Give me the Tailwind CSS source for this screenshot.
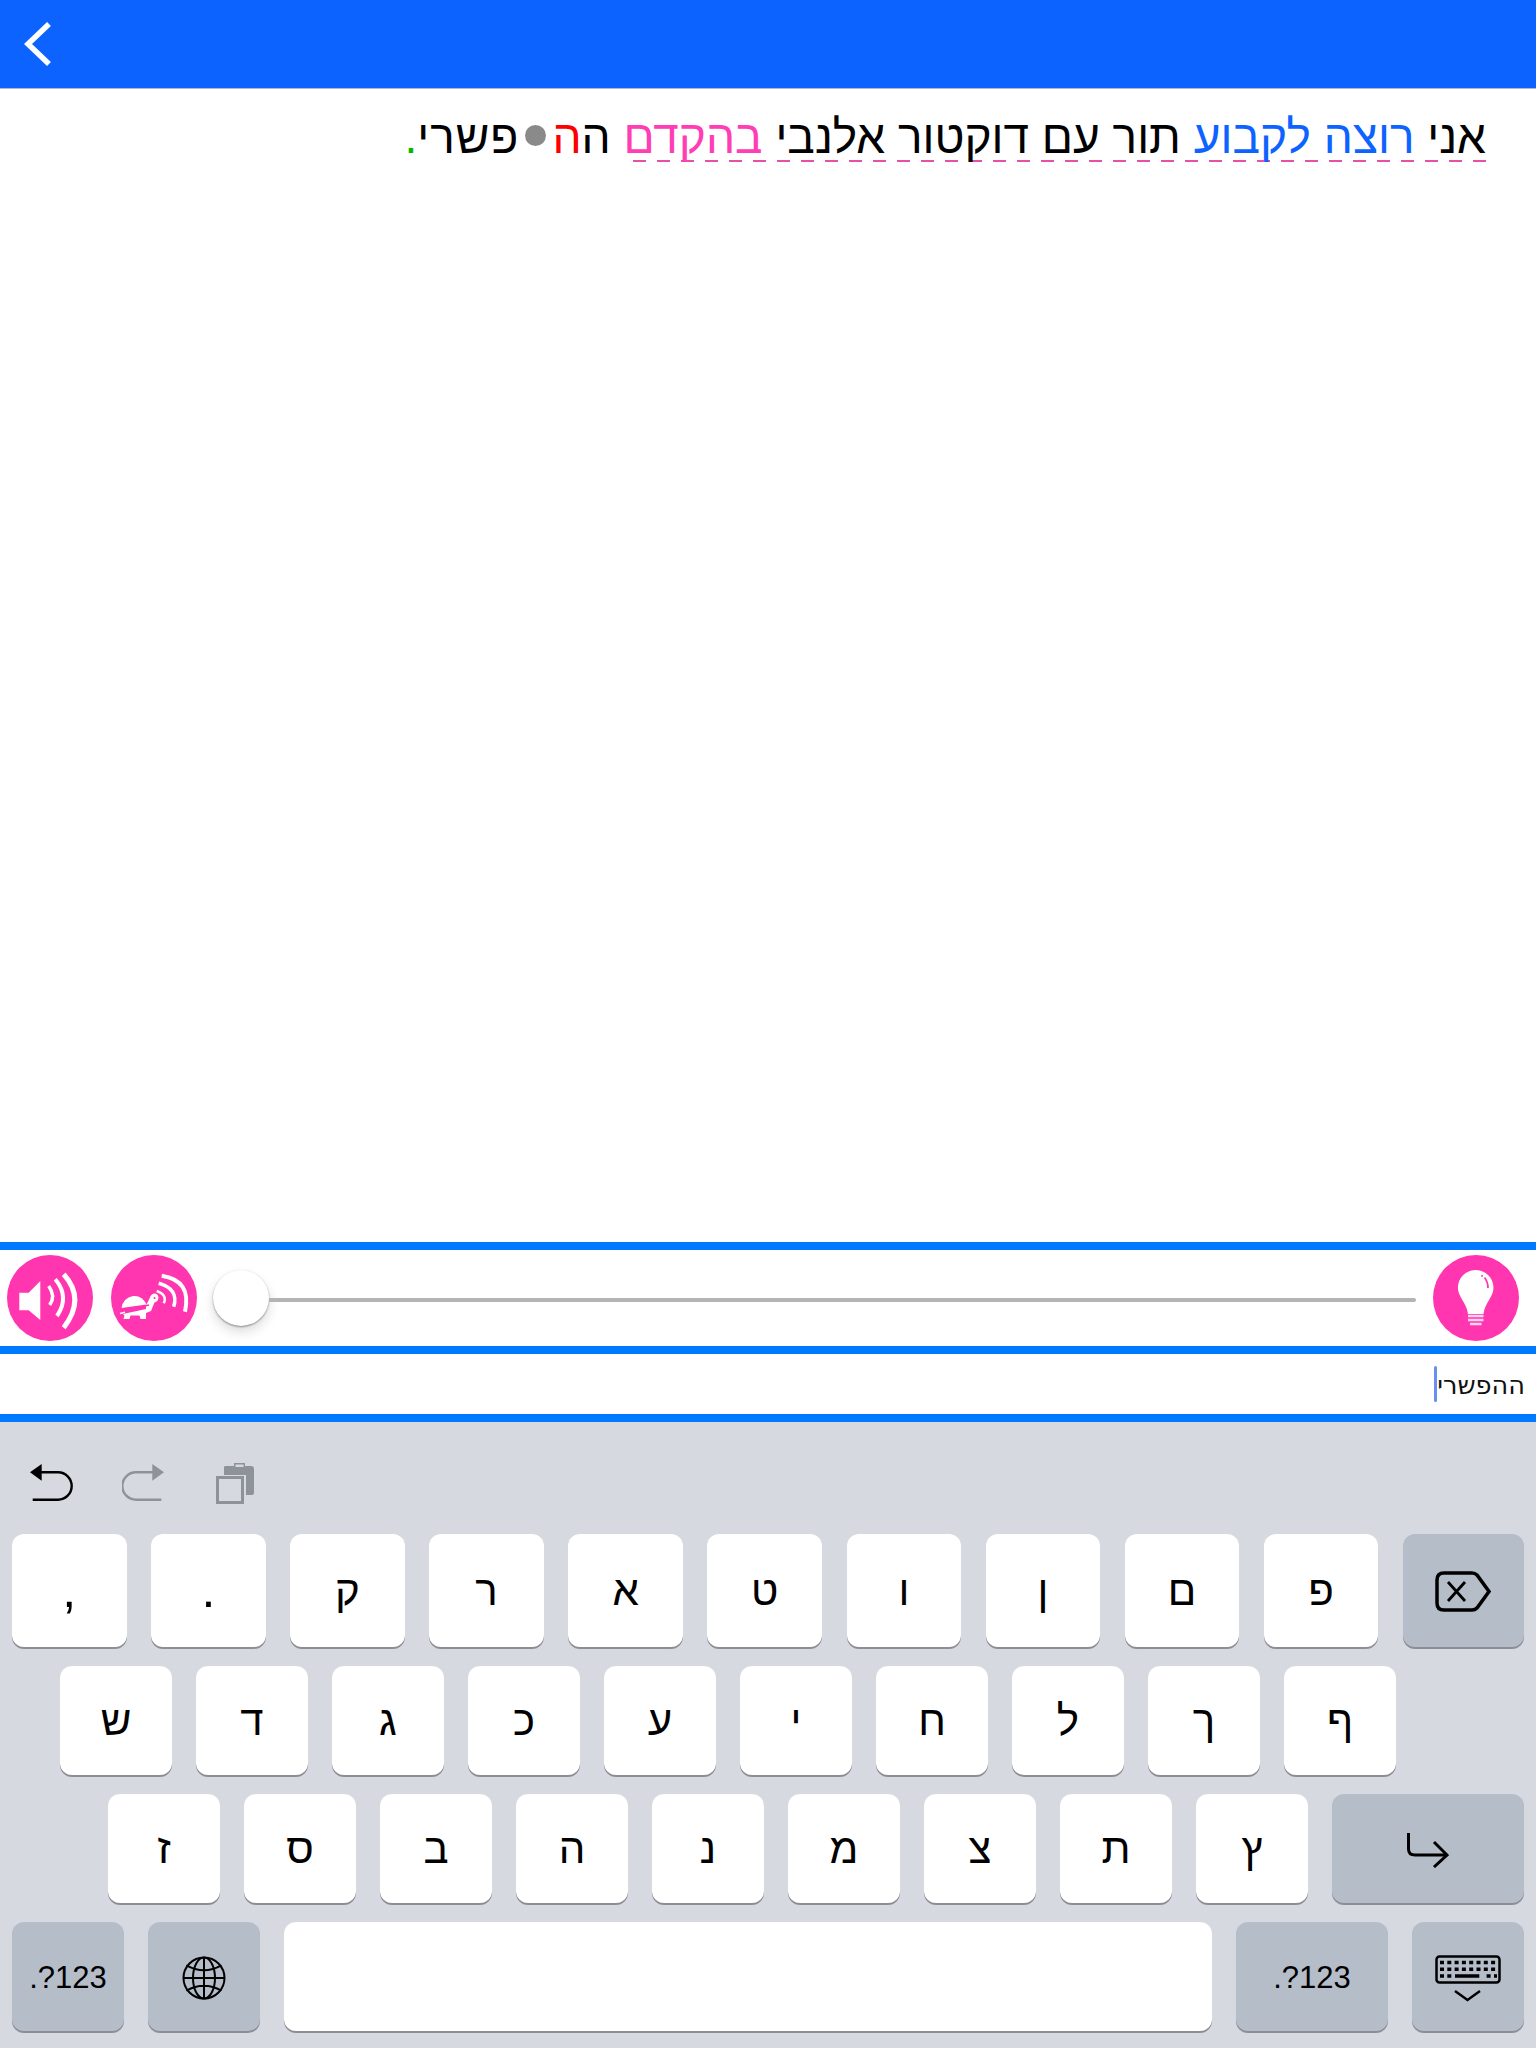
<!DOCTYPE html>
<html lang="he">
<head>
    <meta charset="UTF-8">
    <meta name="viewport" content="width=device-width, initial-scale=1.0">
    <title>Keyboard practice</title>
    <script src="https://cdn.jsdelivr.net/npm/@tailwindcss/browser@4"></script>
</head>
<body class="bg-white">
<div class="w-[1536px] h-[2048px] flex flex-col overflow-hidden font-['Liberation_Sans',sans-serif] text-black">

    <!-- Navbar -->
    <header class="h-[89px] shrink-0 bg-[#0d63ff] border-b border-[#b3b8c4] flex items-center pl-[24px]">
        <svg class="w-[28px] h-[44px]" viewBox="0 0 28 44" fill="none" stroke="#fff" stroke-width="5.500"><path d="M25 2 L4 22 L25 42"/></svg>
    </header>

    <!-- Sentence -->
    <main class="flex-1 pt-[18px] pr-[50px]" dir="rtl">
        <p class="text-[46px] leading-[60px]"><span class="bg-no-repeat bg-[position:left_0_bottom_1px] bg-[length:100%_2px] bg-[repeating-linear-gradient(to_left,#e94fa8_0_13px,transparent_13px_24px)]">אני <span class="text-[#0d63ff]">רוצה לקבוע</span> תור עם דוקטור אלנבי <span class="text-[#ff3db5]">בהקדם</span></span> ה<span class="text-[#ff0000]">ה</span><span class="inline-block w-[21px] h-[21px] rounded-full bg-[#8a8a8a] mx-[6px] align-[7px]"></span><span class="tracking-[1px]">פשרי</span><span class="text-[#00b800]">.</span></p>
    </main>

    <!-- Audio bar -->
    <section class="h-[112px] shrink-0 border-y-8 border-[#007aff] flex items-center pl-[7px] pr-[17px]">
        <button class="w-[86px] h-[86px] rounded-full bg-[#ff36b0]">
            <svg viewBox="0 0 86 86" class="w-full h-full" fill="none" stroke="#fff" stroke-linecap="butt">
                <path d="M12.300 37.700H21.700L33.300 26V65L21.700 55.300H12.300Z" fill="#fff" stroke="none"/>
                <path d="M41.700 31Q49 41 42.700 50" stroke-width="3.500"/>
                <path d="M48.300 24.300Q63 42 50 61" stroke-width="4"/>
                <path d="M56.700 19.300Q79 44 56.700 72.700" stroke-width="5"/>
            </svg>
        </button>
        <button class="w-[86px] h-[86px] rounded-full bg-[#ff36b0] ml-[18px]">
            <svg viewBox="0 0 86 86" class="w-full h-full" fill="none" stroke="#fff">
                <!-- turtle -->
                <path d="M10.500 53Q12 43 22 41Q31 40 35.500 49.500Z" fill="#fff" stroke="none"/>
                <path d="M12 59L35 54V64H29.500L28.500 60.500H19.500L18.500 64H12.500L13.500 60.500Z" fill="#fff" stroke="none"/>
                <path d="M35 50Q37 47 38.500 43.500Q40 38.500 44 38.500Q47.500 39 47.500 43Q47 46.500 43.500 47.500L40 56L35 58Z" fill="#fff" stroke="none"/>
                <path d="M9 57L38 50" stroke="#ff36b0" stroke-width="1.800"/>
                <path d="M9 58.500L14 57.300" stroke="#fff" stroke-width="1.500"/>
                <circle cx="43.500" cy="43" r="1" fill="#ff36b0" stroke="none"/>
                <!-- sound waves -->
                <path d="M45.700 36Q56.800 39.900 52.700 48.300" stroke-width="2.500"/>
                <path d="M47.700 28.300Q68.200 34 62.700 51.700" stroke-width="3.500"/>
                <path d="M50.700 20.700Q81 25.300 74 56.700" stroke-width="4"/>
            </svg>
        </button>
        <!-- slider -->
        <div class="flex-1 flex items-center ml-[16px] mr-[17px]">
            <div class="w-[56px] h-[56px] rounded-full bg-white shrink-0 shadow-[0_6px_12px_rgba(0,0,0,0.14),0_1px_2px_rgba(0,0,0,0.4)]"></div>
            <div class="flex-1 h-[4px] bg-[#b4b4b4] rounded-r-full mt-[3px]"></div>
        </div>
        <button class="w-[86px] h-[86px] rounded-full bg-[#ff36b0]">
            <svg viewBox="0 0 86 86" class="w-full h-full" fill="none">
                <path d="M42.700 15C32.800 15 24.900 23 24.900 32.700C24.900 42 33.500 47 35 59H50.500C52 47 60.500 42 60.500 32.700C60.500 23 52.500 15 42.700 15Z" fill="#fff"/>
                <path d="M48.300 20.500L49.800 21.300M51.500 22.500Q55 27 55 33" stroke="#ff36b0" stroke-width="1.800"/>
                <path d="M35 61H50.500M35 65H50.500M37 69H48.500" stroke="#ffd3ec" stroke-width="2.500"/>
            </svg>
        </button>
    </section>

    <!-- Typed answer -->
    <div class="h-[68px] shrink-0 border-b-8 border-[#007aff] flex items-center justify-start pr-[11px]" dir="rtl">
        <span class="font-['DejaVu_Sans',sans-serif] text-[25.6px] text-[#111111] mt-[2px]">ההפשרי</span>
        <span class="w-[3px] h-[36px] bg-[#6b8ff0] rounded-full"></span>
    </div>

    <!-- Keyboard -->
    <section class="h-[626px] shrink-0 bg-[#d6d9e0] text-[42px]">
        <div class="h-[112px] flex items-center pl-[30px] pt-[10px]">
            <svg class="w-[44px] h-[38px]" viewBox="0 0 44 38" fill="none" stroke="#000" stroke-width="2.400"><path d="M0 8.300L11.700 0V16.700Z" fill="#000" stroke="none"/><path d="M10 8.300H28A13.700 13.700 0 0 1 28 35.700H2.700"/></svg>
            <svg class="w-[44px] h-[38px] ml-[48px]" viewBox="0 0 44 38" fill="none" stroke="#8e9299" stroke-width="2.400"><path d="M42 8.300L30.300 0V16.700Z" fill="#8e9299" stroke="none"/><path d="M32 8.300H14A13.700 13.700 0 0 0 14 35.700H39.300"/></svg>
            <svg class="w-[40px] h-[42px] ml-[50px]" viewBox="0 0 40 42" fill="none"><path d="M8 13V5Q8 4 10 4H18V1H29V4H35Q38 4 38 7V31Q38 33 36 33H30V13Z" fill="#8e9299"/><rect x="19.500" y="2.500" width="8" height="2.500" fill="#d6d9e0"/><rect x="1.500" y="15.500" width="25" height="25" stroke="#8e9299" stroke-width="3"/></svg>
        </div>

        <div class="flex gap-[24.5px] pl-[12px] pr-[12px]">
            <div class="flex-1 h-[113px] bg-white rounded-[12px] shadow-[0_2px_0_#8c8e93] flex items-center justify-center text-[50px]">,</div>
            <div class="flex-1 h-[113px] bg-white rounded-[12px] shadow-[0_2px_0_#8c8e93] flex items-center justify-center text-[50px]">.</div>
            <div class="flex-1 h-[113px] bg-white rounded-[12px] shadow-[0_2px_0_#8c8e93] flex items-center justify-center">ק</div>
            <div class="flex-1 h-[113px] bg-white rounded-[12px] shadow-[0_2px_0_#8c8e93] flex items-center justify-center">ר</div>
            <div class="flex-1 h-[113px] bg-white rounded-[12px] shadow-[0_2px_0_#8c8e93] flex items-center justify-center">א</div>
            <div class="flex-1 h-[113px] bg-white rounded-[12px] shadow-[0_2px_0_#8c8e93] flex items-center justify-center">ט</div>
            <div class="flex-1 h-[113px] bg-white rounded-[12px] shadow-[0_2px_0_#8c8e93] flex items-center justify-center">ו</div>
            <div class="flex-1 h-[113px] bg-white rounded-[12px] shadow-[0_2px_0_#8c8e93] flex items-center justify-center">ן</div>
            <div class="flex-1 h-[113px] bg-white rounded-[12px] shadow-[0_2px_0_#8c8e93] flex items-center justify-center">ם</div>
            <div class="flex-1 h-[113px] bg-white rounded-[12px] shadow-[0_2px_0_#8c8e93] flex items-center justify-center">פ</div>
            <div class="w-[121px] h-[113px] bg-[#b5bdc9] rounded-[12px] shadow-[0_2px_0_#8c8e93] flex items-center justify-center">
                <svg class="w-[56px] h-[41px] mt-[1px]" viewBox="0 0 56 41" fill="none" stroke="#000" stroke-width="3.500"><path d="M9 2H37Q40 2 42 4L54 20.500L42 37Q40 39 37 39H9Q2 39 2 32V9Q2 2 9 2Z"/><path d="M13 11L30 30M30 11L13 30" stroke-width="2.800"/></svg>
            </div>
        </div>

        <div class="flex gap-[24px] pl-[60px] mt-[19px]">
            <div class="w-[112px] h-[109px] bg-white rounded-[12px] shadow-[0_2px_0_#8c8e93] flex items-center justify-center">ש</div>
            <div class="w-[112px] h-[109px] bg-white rounded-[12px] shadow-[0_2px_0_#8c8e93] flex items-center justify-center">ד</div>
            <div class="w-[112px] h-[109px] bg-white rounded-[12px] shadow-[0_2px_0_#8c8e93] flex items-center justify-center">ג</div>
            <div class="w-[112px] h-[109px] bg-white rounded-[12px] shadow-[0_2px_0_#8c8e93] flex items-center justify-center">כ</div>
            <div class="w-[112px] h-[109px] bg-white rounded-[12px] shadow-[0_2px_0_#8c8e93] flex items-center justify-center">ע</div>
            <div class="w-[112px] h-[109px] bg-white rounded-[12px] shadow-[0_2px_0_#8c8e93] flex items-center justify-center">י</div>
            <div class="w-[112px] h-[109px] bg-white rounded-[12px] shadow-[0_2px_0_#8c8e93] flex items-center justify-center">ח</div>
            <div class="w-[112px] h-[109px] bg-white rounded-[12px] shadow-[0_2px_0_#8c8e93] flex items-center justify-center">ל</div>
            <div class="w-[112px] h-[109px] bg-white rounded-[12px] shadow-[0_2px_0_#8c8e93] flex items-center justify-center">ך</div>
            <div class="w-[112px] h-[109px] bg-white rounded-[12px] shadow-[0_2px_0_#8c8e93] flex items-center justify-center">ף</div>
        </div>

        <div class="flex gap-[24px] pl-[108px] mt-[19px]">
            <div class="w-[112px] h-[109px] bg-white rounded-[12px] shadow-[0_2px_0_#8c8e93] flex items-center justify-center">ז</div>
            <div class="w-[112px] h-[109px] bg-white rounded-[12px] shadow-[0_2px_0_#8c8e93] flex items-center justify-center">ס</div>
            <div class="w-[112px] h-[109px] bg-white rounded-[12px] shadow-[0_2px_0_#8c8e93] flex items-center justify-center">ב</div>
            <div class="w-[112px] h-[109px] bg-white rounded-[12px] shadow-[0_2px_0_#8c8e93] flex items-center justify-center">ה</div>
            <div class="w-[112px] h-[109px] bg-white rounded-[12px] shadow-[0_2px_0_#8c8e93] flex items-center justify-center">נ</div>
            <div class="w-[112px] h-[109px] bg-white rounded-[12px] shadow-[0_2px_0_#8c8e93] flex items-center justify-center">מ</div>
            <div class="w-[112px] h-[109px] bg-white rounded-[12px] shadow-[0_2px_0_#8c8e93] flex items-center justify-center">צ</div>
            <div class="w-[112px] h-[109px] bg-white rounded-[12px] shadow-[0_2px_0_#8c8e93] flex items-center justify-center">ת</div>
            <div class="w-[112px] h-[109px] bg-white rounded-[12px] shadow-[0_2px_0_#8c8e93] flex items-center justify-center">ץ</div>
            <div class="w-[192px] h-[109px] bg-[#b5bdc9] rounded-[12px] shadow-[0_2px_0_#8c8e93] flex items-center justify-center">
                <svg class="w-[42px] h-[35px] mt-[3px]" viewBox="0 0 42 35" fill="none" stroke="#000" stroke-width="3"><path d="M1.500 0V16Q1.500 22 8 22H39"/><path d="M27 9L40 22L27 34"/></svg>
            </div>
        </div>

        <div class="flex gap-[24px] pl-[12px] mt-[19px] text-[31px]">
            <div class="w-[112px] h-[109px] pt-[3px] bg-[#b5bdc9] rounded-[12px] shadow-[0_2px_0_#8c8e93] flex items-center justify-center">.?123</div>
            <div class="w-[112px] h-[109px] bg-[#b5bdc9] rounded-[12px] shadow-[0_2px_0_#8c8e93] flex items-center justify-center">
                <svg class="w-[44px] h-[44px] mt-[3px]" viewBox="0 0 44 44" fill="none" stroke="#000" stroke-width="2"><circle cx="22" cy="22" r="20.500"/><ellipse cx="22" cy="22" rx="11" ry="20.500"/><path d="M22 1.500V42.500M1.500 22H42.500M4.400 9.300Q22 19 39.400 9.300M4.400 34.700Q22 25 39.400 34.700"/></svg>
            </div>
            <div class="w-[928px] h-[109px] bg-white rounded-[12px] shadow-[0_2px_0_#8c8e93]"></div>
            <div class="w-[152px] h-[109px] pt-[3px] bg-[#b5bdc9] rounded-[12px] shadow-[0_2px_0_#8c8e93] flex items-center justify-center">.?123</div>
            <div class="w-[112px] h-[109px] bg-[#b5bdc9] rounded-[12px] shadow-[0_2px_0_#8c8e93] flex flex-col items-center justify-center">
                <svg class="w-[66px] h-[47px] mt-[4px]" viewBox="0 0 66 47" fill="none" stroke="#000"><rect x="1.500" y="1.500" width="63" height="26" rx="3" stroke-width="2.500"/><path d="M5 7.600H62M5 14.300H62" stroke-width="3.500" stroke-dasharray="4 3.300"/><path d="M5 21H9M12.300 21H16.300M20 21H44.300M51.600 21H55.600M59 21H62" stroke-width="3.500"/><path d="M20 36L32.500 45L45 36" stroke-width="2.500"/></svg>
            </div>
        </div>
    </section>
</div>
</body>
</html>
